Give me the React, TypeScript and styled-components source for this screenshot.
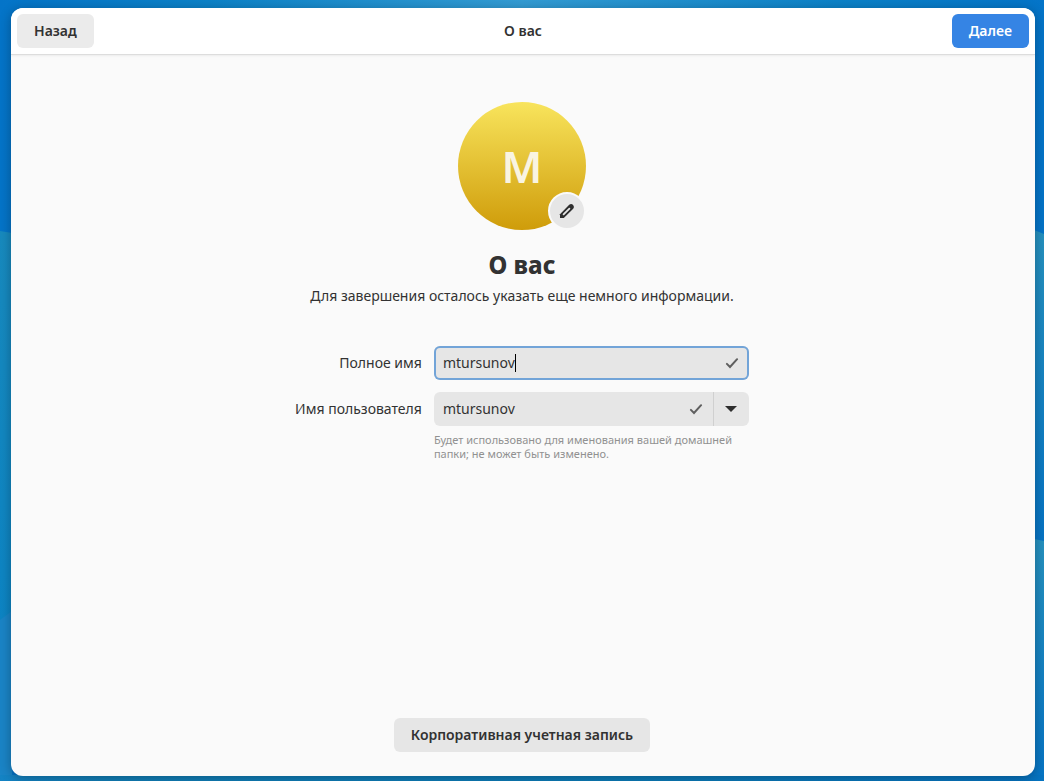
import React, { useState } from "react";
import styled, { createGlobalStyle, css } from "styled-components";

const GlobalStyle = createGlobalStyle`
  *, *::before, *::after { box-sizing: border-box; }
  body {
    margin: 0;
    font-family: "Noto Sans", "Open Sans", sans-serif;
    font-size: 14px;
    line-height: 20px;
    color: #323232;
  }
  button, input { font: inherit; color: inherit; }
`;

const Desktop = styled.div`
  position: relative;
  display: flex;
  min-height: 100vh;
  padding: 8px 9px 5px 11px;
  overflow: hidden;
  background: #0473c6;
`;

const Wallpaper = styled.svg`
  position: absolute;
  inset: 0;
  width: 100%;
  height: 100%;
`;

const Window = styled.main`
  position: relative;
  flex: 1;
  min-width: 0;
  display: flex;
  flex-direction: column;
  border-radius: 12px;
  overflow: hidden;
  background: #fafafa;
  box-shadow: 0 2px 12px rgba(0, 0, 0, 0.3);
`;

const HeaderBar = styled.header`
  display: grid;
  grid-template-columns: 1fr auto 1fr;
  align-items: center;
  padding: 6px;
  background: #ffffff;
  border-bottom: 1px solid #dddddd;
  box-shadow: 0 1px 2px rgba(0, 0, 0, 0.06);
`;

const HeaderTitle = styled.div`
  font-weight: 600;
`;

const Button = styled.button<{ $tone?: "header" | "suggested"; $end?: boolean }>`
  height: 34px;
  padding: 0 17px;
  border: 0;
  border-radius: 6px;
  font-weight: 600;
  background: #e6e6e6;
  justify-self: ${(p) => (p.$end ? "end" : "start")};
  ${(p) => p.$tone === "header" && css`background: #ebebeb;`}
  ${(p) => p.$tone === "suggested" && css`background: #3584e4; color: #ffffff;`}
`;

const Content = styled.section`
  flex: 1;
  display: flex;
  flex-direction: column;
  align-items: center;
  padding: 47px 26px 24px 24px;
`;

const Avatar = styled.div`
  position: relative;
  display: grid;
  place-items: center;
  width: 128px;
  height: 128px;
  border-radius: 50%;
  background: linear-gradient(#f8e45c, #cf9c0a);
  color: #f9f4e1;
  font-size: 44px;
  font-weight: 600;
  line-height: 60px;
`;

const EditButton = styled.button`
  position: absolute;
  right: 0;
  bottom: 0;
  display: grid;
  place-items: center;
  width: 38px;
  height: 38px;
  padding: 0;
  border: 2px solid #fafafa;
  border-radius: 50%;
  background: #e6e6e6;
`;

const Title = styled.h1`
  margin: 18px 0 0;
  font-size: 24px;
  font-weight: 800;
  line-height: 34px;
`;

const Subtitle = styled.p`
  margin: 4px 0 40px;
  text-align: center;
`;

const Form = styled.form`
  display: grid;
  grid-template-columns: auto minmax(0, 315px);
  column-gap: 12px;
  row-gap: 12px;
`;

const Label = styled.label`
  line-height: 34px;
  text-align: right;
`;

const Field = styled.div<{ $focused?: boolean }>`
  display: flex;
  align-items: center;
  height: 34px;
  padding-left: 9px;
  border-radius: 6px;
  background: #e6e6e6;
  box-shadow: ${(p) => (p.$focused ? "inset 0 0 0 2px #72a4d8" : "none")};
`;

const Input = styled.input<{ $fit?: boolean }>`
  min-width: 0;
  padding: 0;
  border: 0;
  outline: 0;
  background: transparent;
  ${(p) => (p.$fit ? css`field-sizing: content; caret-color: transparent;` : css`flex: 1;`)}
`;

const Caret = styled.span`
  width: 1px;
  height: 18px;
  background: #000000;
`;

const Check = styled.svg`
  flex: none;
  width: 16px;
  height: 16px;
  margin: 0 9px 0 auto;
`;

const DropButton = styled.button`
  display: grid;
  place-items: center;
  width: 36px;
  height: 34px;
  padding: 0;
  border: 0;
  border-left: 1px solid #d0d0d0;
  background: transparent;
`;

const Hint = styled.p`
  grid-column: 2;
  margin: -5px 0 0;
  font-size: 11px;
  line-height: 14px;
  color: #919191;
`;

const Footer = styled.footer`
  margin-top: auto;
`;

function CheckIcon() {
  return (
    <Check viewBox="0 0 16 16" aria-hidden="true">
      <path d="M2.9 8.9 6 12 13.1 4.2" fill="none" stroke="#5f5f5f" strokeWidth="2" strokeLinecap="round" />
    </Check>
  );
}

function Background() {
  return (
    <Wallpaper viewBox="0 0 1044 781" preserveAspectRatio="none" aria-hidden="true">
      <defs>
        <linearGradient id="top" x1="0" x2="1" y1="0" y2="0">
          <stop offset="0" stopColor="#0474c8" />
          <stop offset="0.2" stopColor="#0c82c8" />
          <stop offset="0.5" stopColor="#339cd4" />
          <stop offset="0.8" stopColor="#0c82c8" />
          <stop offset="1" stopColor="#0474c8" />
        </linearGradient>
        <linearGradient id="left" x1="0" x2="0" y1="0" y2="1">
          <stop offset="0" stopColor="#188abe" />
          <stop offset="1" stopColor="#0c84c4" />
        </linearGradient>
        <linearGradient id="right" x1="0" x2="0" y1="0" y2="1">
          <stop offset="0" stopColor="#2691bf" />
          <stop offset="1" stopColor="#0674c4" />
        </linearGradient>
        <linearGradient id="bottom" x1="0" x2="1" y1="0" y2="0">
          <stop offset="0" stopColor="#1483c4" />
          <stop offset="0.1" stopColor="#117fb8" />
          <stop offset="0.6" stopColor="#0c7cb8" />
          <stop offset="1" stopColor="#0673c0" />
        </linearGradient>
      </defs>
      <rect width="1044" height="240" fill="url(#top)" />
      <path d="M0 231 12 233V640H0Z" fill="url(#left)" />
      <path d="M0 620 12 611V781H0Z" fill="#1a84c6" />
      <path d="M1034 230 1044 234V541H1034Z" fill="url(#right)" />
      <path d="M1034 539 1044 541V781H1034Z" fill="url(#right)" />
      <rect y="775" width="1044" height="6" fill="url(#bottom)" />
    </Wallpaper>
  );
}

export default function App() {
  const [fullName, setFullName] = useState("mtursunov");
  const [userName, setUserName] = useState("mtursunov");

  return (
    <>
      <GlobalStyle />
      <Desktop>
        <Background />
        <Window>
          <HeaderBar>
            <Button type="button" $tone="header">Назад</Button>
            <HeaderTitle>О вас</HeaderTitle>
            <Button type="button" $tone="suggested" $end>Далее</Button>
          </HeaderBar>
          <Content>
            <Avatar>
              М
              <EditButton type="button" aria-label="Изменить изображение">
                <svg width="16" height="16" viewBox="0 0 16 16" aria-hidden="true">
                  <path d="M1 15V11.2L10.2 1.8Q12.2.1 14.1 1.9 15.9 3.8 14.2 5.8L4.8 15Z" fill="#2e2e2e" />
                  <path d="M4.6 11.4 10.4 5.6" stroke="#e6e6e6" strokeWidth="1.8" strokeLinecap="round" />
                </svg>
              </EditButton>
            </Avatar>
            <Title>О вас</Title>
            <Subtitle>Для завершения осталось указать еще немного информации.</Subtitle>
            <Form>
              <Label htmlFor="full-name">Полное имя</Label>
              <Field $focused>
                <Input id="full-name" $fit value={fullName} onChange={(e) => setFullName(e.target.value)} />
                <Caret />
                <CheckIcon />
              </Field>
              <Label htmlFor="user-name">Имя пользователя</Label>
              <Field>
                <Input id="user-name" value={userName} onChange={(e) => setUserName(e.target.value)} />
                <CheckIcon />
                <DropButton type="button" aria-label="Варианты имени">
                  <svg width="12" height="6" viewBox="0 0 12 6" aria-hidden="true">
                    <path d="M0 0H12L6 6Z" fill="#2e2e2e" />
                  </svg>
                </DropButton>
              </Field>
              <Hint>Будет использовано для именования вашей домашней папки; не может быть изменено.</Hint>
            </Form>
            <Footer>
              <Button type="button">Корпоративная учетная запись</Button>
            </Footer>
          </Content>
        </Window>
      </Desktop>
    </>
  );
}
